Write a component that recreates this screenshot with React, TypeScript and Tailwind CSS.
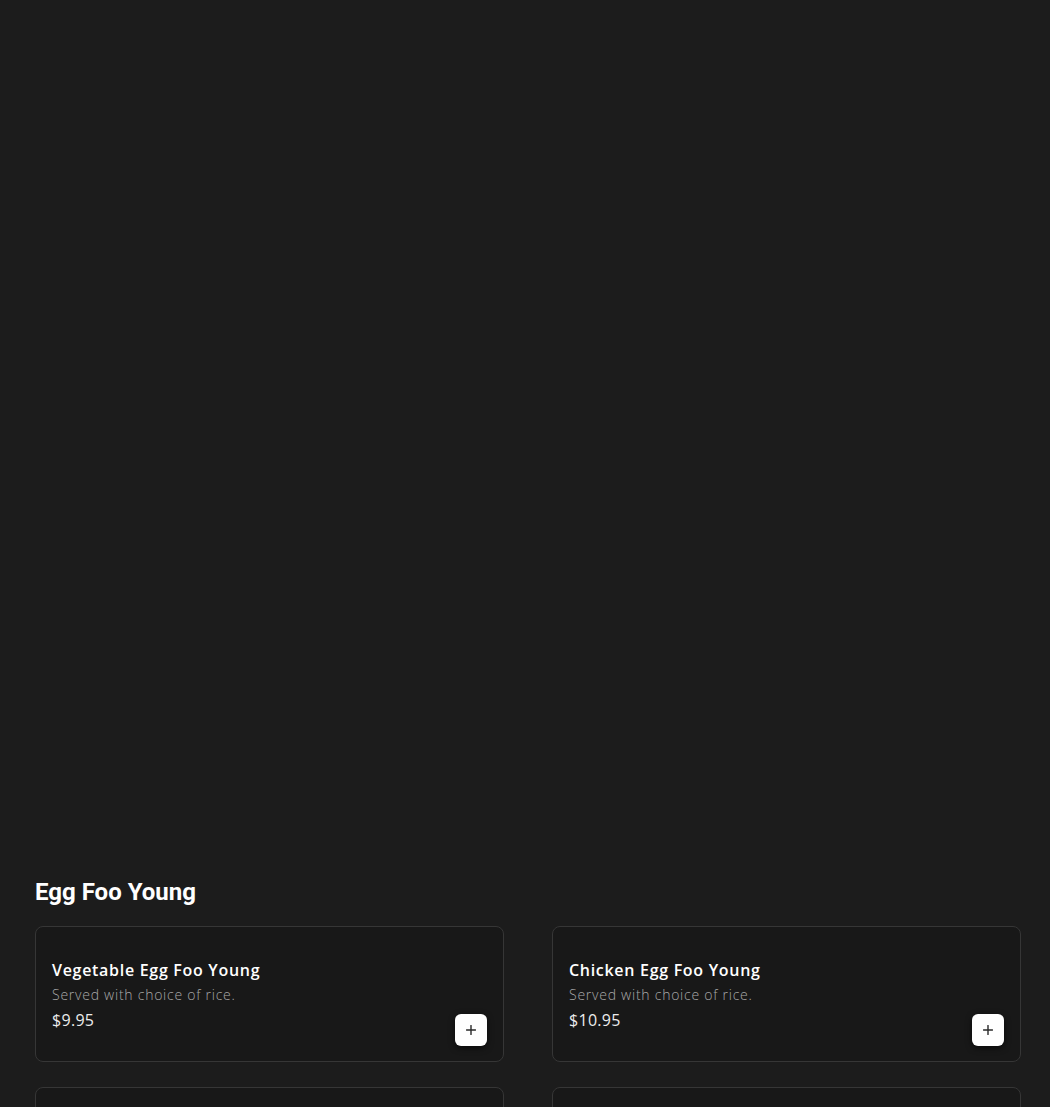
import React from 'react';

type Item = { name: string; desc: string; price: string };

const items: Item[] = [
  { name: 'Vegetable Egg Foo Young', desc: 'Served with choice of rice.', price: '$9.95' },
  { name: 'Chicken Egg Foo Young', desc: 'Served with choice of rice.', price: '$10.95' },
  { name: 'Pork Egg Foo Young', desc: 'Served with choice of rice.', price: '$10.95' },
  { name: 'Beef Egg Foo Young', desc: 'Served with choice of rice.', price: '$11.95' },
];

const PlusIcon = () => (
  <svg width="10" height="10" viewBox="0 0 10 10" fill="none">
    <path d="M5 0.5v9M0.5 5h9" stroke="#2a2a2a" strokeWidth="1.4" strokeLinecap="round" />
  </svg>
);

const ItemCard: React.FC<{ item: Item }> = ({ item }) => (
  <div className="relative h-[136px] rounded-lg border border-[#363636] bg-[#181818] px-4 pt-[32px]">
    <h3 className="text-[16px] leading-[22px] font-semibold text-white tracking-[0.7px]">{item.name}</h3>
    <p className="mt-[4px] text-[14px] leading-[20px] font-light text-[#a8a8a8] tracking-[0.75px]">{item.desc}</p>
    <p className="mt-[5px] text-[16px] leading-[20px] text-[#ececec] tracking-[0.3px]">{item.price}</p>
    <button className="absolute right-4 bottom-[15px] flex h-8 w-8 items-center justify-center rounded-md bg-white shadow-[0_2px_6px_rgba(0,0,0,0.6)]">
      <PlusIcon />
    </button>
  </div>
);

export default function App() {
  return (
    <div
      className="h-[1107px] overflow-hidden bg-[#1c1c1c] pl-[35px] pr-[29px] pt-[876px]"
      style={{ fontFamily: '"Open Sans", "Noto Sans", sans-serif' }}
    >
      <h2
        className="text-[24px] leading-[32px] font-bold text-white"
        style={{ fontFamily: 'Roboto, "Liberation Sans", sans-serif' }}
      >
        Egg Foo Young
      </h2>
      <div className="mt-[18px] grid grid-cols-2 gap-x-12 gap-y-[25px]">
        {items.map((it) => (
          <ItemCard key={it.name} item={it} />
        ))}
      </div>
    </div>
  );
}
